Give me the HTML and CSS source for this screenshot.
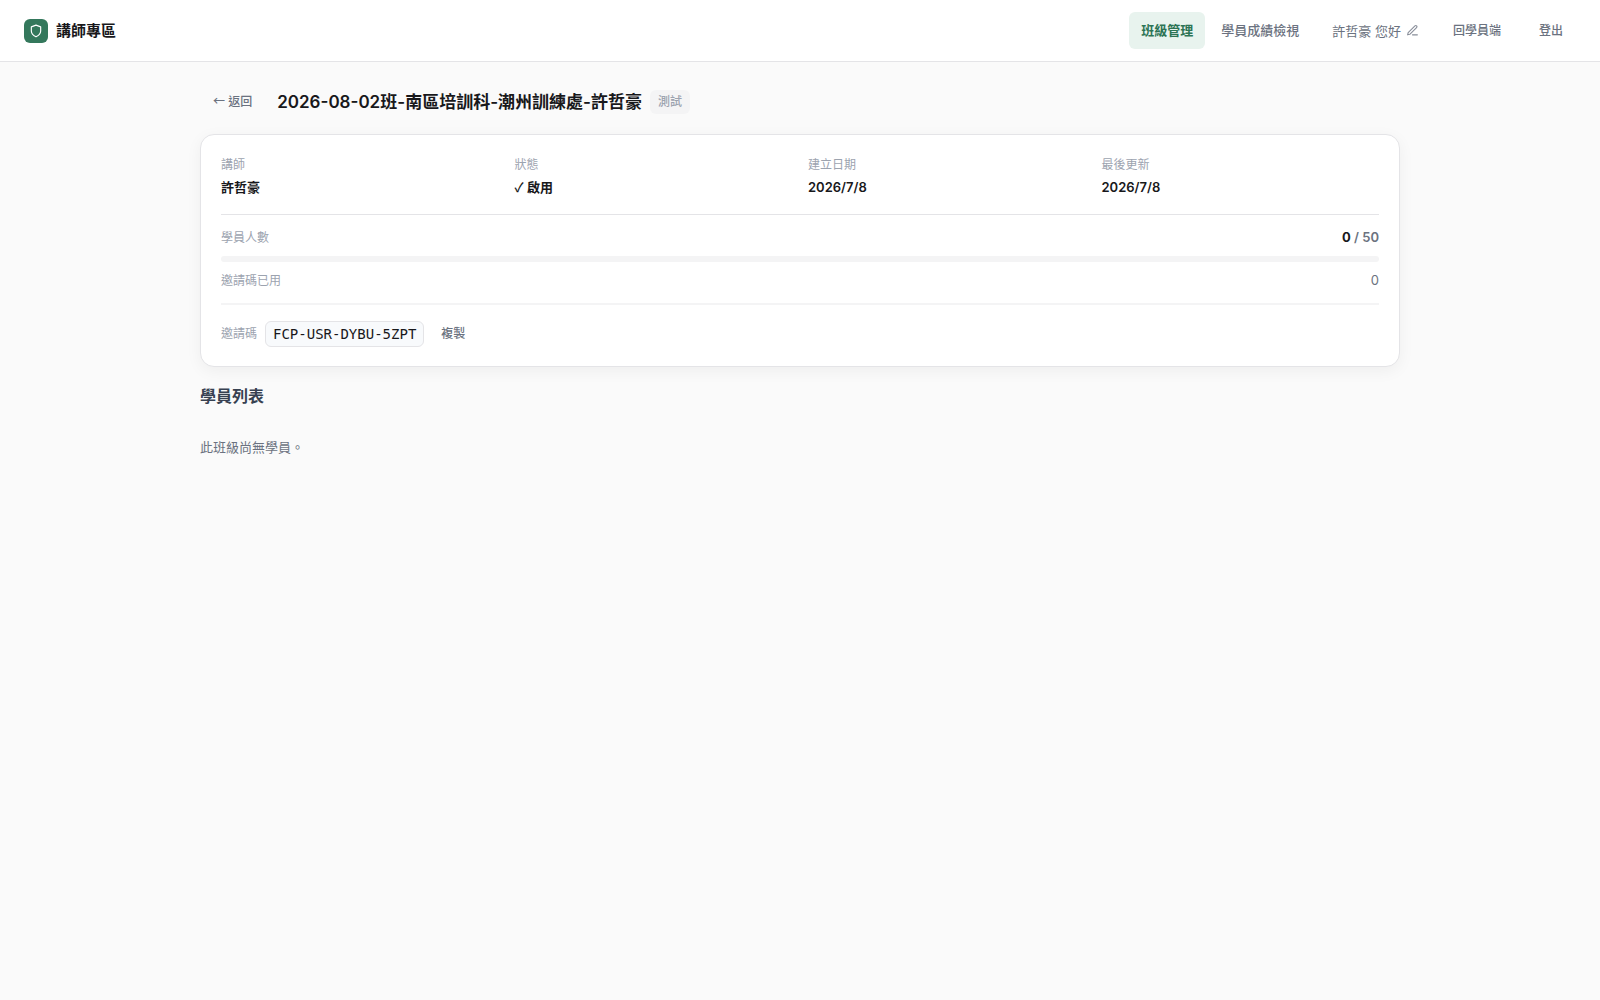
FILE: index.html
```html
<!DOCTYPE html>
<html lang="zh-Hant">
<head>
    <meta charset="UTF-8">
    <meta name="viewport" content="width=device-width, initial-scale=1.0">
    <title>講師專區</title>
    <link rel="stylesheet" href="styles.css">
</head>
<body>
<!-- top bar -->
<header class="topbar">
    <div class="brand">
        <span class="brand-icon">
            <svg width="14" height="14" viewBox="0 0 24 24" fill="none" stroke="currentColor" stroke-width="2" stroke-linecap="round" stroke-linejoin="round" aria-hidden="true">
                <path d="M12 22s8-4 8-10V5l-8-3-8 3v7c0 6 8 10 8 10z"/>
            </svg>
        </span>
        <span class="brand-name">講師專區</span>
    </div>
    <div class="topbar-right">
        <nav class="nav">
            <a href="#" class="nav-link active">班級管理</a>
            <a href="#" class="nav-link">學員成績檢視</a>
        </nav>
        <button type="button" class="user-btn">
            許哲豪 您好
            <svg width="13" height="13" viewBox="0 0 24 24" fill="none" stroke="currentColor" stroke-width="2" stroke-linecap="round" stroke-linejoin="round" aria-hidden="true">
                <path d="M12 20h9"/>
                <path d="M16.5 3.5a2.12 2.12 0 0 1 3 3L7 19l-4 1 1-4z"/>
            </svg>
        </button>
        <button type="button" class="btn-ghost">回學員端</button>
        <button type="button" class="btn-ghost">登出</button>
    </div>
</header>

<main class="container">
    <!-- page title -->
    <div class="page-head">
        <button type="button" class="btn-ghost"><span class="symbol">←</span> 返回</button>
        <div class="title-row">
            <h1>2026-08-02班-南區培訓科-潮州訓練處-許哲豪</h1>
            <span class="badge">測試</span>
        </div>
    </div>

    <!-- class info -->
    <section class="card">
        <dl class="info-grid">
            <div>
                <dt>講師</dt>
                <dd>許哲豪</dd>
            </div>
            <div>
                <dt>狀態</dt>
                <dd><span class="symbol">✓</span> 啟用</dd>
            </div>
            <div>
                <dt>建立日期</dt>
                <dd>2026/7/8</dd>
            </div>
            <div>
                <dt>最後更新</dt>
                <dd>2026/7/8</dd>
            </div>
        </dl>

        <div class="usage">
            <div class="usage-row">
                <span class="label">學員人數</span>
                <span class="count"><b>0</b> / 50</span>
            </div>
            <div class="bar"></div>
            <div class="usage-row">
                <span class="label">邀請碼已用</span>
                <span class="used">0</span>
            </div>
        </div>

        <div class="invite">
            <span class="label">邀請碼</span>
            <code>FCP-USR-DYBU-5ZPT</code>
            <button type="button" class="btn-ghost">複製</button>
        </div>
    </section>

    <!-- students -->
    <h2>學員列表</h2>
    <p class="empty">此班級尚無學員。</p>
</main>
</body>
</html>
```
FILE: styles.css
```css
* {
    box-sizing: border-box;
    margin: 0;
    padding: 0;
}

body {
    font-family: Inter, "Noto Sans CJK TC", sans-serif;
    font-size: 13px;
    line-height: 20px;
    background: #fafafa;
    color: #18181b;
}

button {
    font-family: inherit;
    background: none;
    border: 1px solid transparent;
    cursor: pointer;
}

.symbol {
    font-family: "Noto Sans CJK TC", sans-serif;
    font-weight: 500;
    line-height: 1;
}

/* TOP BAR */
.topbar {
    display: flex;
    justify-content: space-between;
    align-items: center;
    padding: 12px 24px;
    background: #fff;
    border-bottom: 1px solid #e4e4e7;
}

.brand {
    display: flex;
    align-items: center;
    gap: 8px;
}

.brand-icon {
    display: flex;
    align-items: center;
    justify-content: center;
    width: 24px;
    height: 24px;
    border-radius: 6px;
    background: #34785c;
    color: #fff;
}

.brand-name {
    font-size: 15px;
    font-weight: 700;
}

.topbar-right {
    display: flex;
    align-items: center;
    gap: 12px;
}

.nav {
    display: flex;
    gap: 4px;
}

.nav-link {
    padding: 8px 12px;
    border-radius: 6px;
    line-height: 21px;
    font-weight: 500;
    color: #6b7280;
    text-decoration: none;
}

.nav-link.active {
    background: #e8f3ee;
    color: #2d7455;
    font-weight: 600;
}

.user-btn {
    display: flex;
    align-items: center;
    gap: 5px;
    padding: 4px 8px;
    font-size: 13px;
    color: #6b7280;
}

.user-btn svg {
    opacity: 0.8;
}

.btn-ghost {
    padding: 6px 12px;
    border-radius: 6px;
    font-size: 12px;
    font-weight: 500;
    line-height: 18px;
    color: #6b7280;
}

/* PAGE */
.container {
    max-width: 1248px;
    margin: 0 auto;
    padding: 24px;
}

.page-head {
    display: flex;
    align-items: center;
    gap: 12px;
    margin-bottom: 16px;
}

.title-row {
    display: flex;
    align-items: center;
    gap: 8px;
}

h1 {
    font-size: 17px;
    font-weight: 600;
    line-height: 28px;
}

.badge {
    padding: 2px 8px;
    border-radius: 6px;
    background: #f4f4f5;
    color: #9ca3af;
    font-size: 12px;
    font-weight: 500;
}

/* CARD */
.card {
    padding: 20px 20px 16px;
    background: #fff;
    border: 1px solid #e4e4e7;
    border-radius: 14px;
    box-shadow: 0 4px 16px rgba(0, 0, 0, 0.05);
}

.info-grid {
    display: grid;
    grid-template-columns: repeat(4, 1fr);
    gap: 16px;
    padding-bottom: 16px;
    border-bottom: 1px solid #e4e4e7;
}

dt,
.label {
    font-size: 12px;
    color: #9ca3af;
}

dd {
    margin-top: 2px;
    line-height: 21px;
    font-weight: 600;
}

.usage {
    padding: 12px 0;
    border-bottom: 2px solid #f4f4f5;
}

.usage-row {
    display: flex;
    justify-content: space-between;
    align-items: center;
    line-height: 21px;
}

.count {
    font-weight: 600;
    color: #6b7280;
}

.count b {
    font-weight: 700;
    color: #18181b;
}

.used {
    color: #6b7280;
}

.bar {
    height: 6px;
    margin: 8px 0;
    border-radius: 3px;
    background: #f4f4f5;
}

.invite {
    display: flex;
    align-items: center;
    gap: 8px;
    padding-top: 13px;
}

.invite .btn-ghost {
    margin-left: -4px;
}

code {
    padding: 2px 7px;
    border: 1px solid #e4e4e7;
    border-radius: 6px;
    background: #f8fafc;
    font-family: "DejaVu Sans Mono", monospace;
    font-size: 14px;
}

/* STUDENTS */
h2 {
    margin-top: 16px;
    font-size: 16px;
    font-weight: 600;
    line-height: 26px;
    color: #374151;
}

.empty {
    padding: 28px 0;
    color: #6b7280;
}
```
